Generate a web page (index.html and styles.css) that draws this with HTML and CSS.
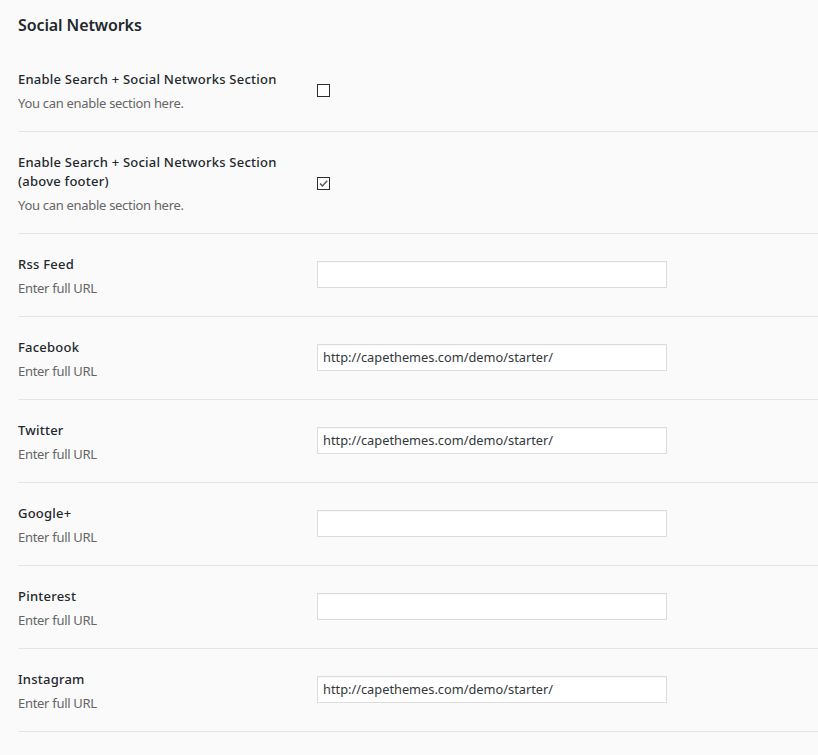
FILE: index.html
```html
<!DOCTYPE html>
<html lang="en">
<head>
<meta charset="utf-8">
<title>Social Networks</title>
<link rel="stylesheet" href="styles.css">
</head>
<body>
<div class="page">
  <h2 class="title">Social Networks</h2>
  <div class="table">
    <div class="row">
      <div class="th">
        <div class="label">Enable Search + Social Networks Section</div>
        <div class="desc">You can enable section here.</div>
      </div>
      <div class="td">
        <span class="check"></span>
      </div>
    </div>
    <div class="row">
      <div class="th">
        <div class="label">Enable Search + Social Networks Section (above footer)</div>
        <div class="desc">You can enable section here.</div>
      </div>
      <div class="td">
        <span class="check checked"><svg viewBox="0 0 9 9" width="9" height="9"><path d="M1 4.6 L3.4 7 L8.2 1.8" fill="none" stroke="#555" stroke-width="1.4"/></svg></span>
      </div>
    </div>
    <div class="row">
      <div class="th">
        <div class="label">Rss Feed</div>
        <div class="desc">Enter full URL</div>
      </div>
      <div class="td"><input class="field" type="text" value=""></div>
    </div>
    <div class="row">
      <div class="th">
        <div class="label">Facebook</div>
        <div class="desc">Enter full URL</div>
      </div>
      <div class="td"><input class="field" type="text" value="http://capethemes.com/demo/starter/"></div>
    </div>
    <div class="row">
      <div class="th">
        <div class="label">Twitter</div>
        <div class="desc">Enter full URL</div>
      </div>
      <div class="td"><input class="field" type="text" value="http://capethemes.com/demo/starter/"></div>
    </div>
    <div class="row">
      <div class="th">
        <div class="label">Google+</div>
        <div class="desc">Enter full URL</div>
      </div>
      <div class="td"><input class="field" type="text" value=""></div>
    </div>
    <div class="row">
      <div class="th">
        <div class="label">Pinterest</div>
        <div class="desc">Enter full URL</div>
      </div>
      <div class="td"><input class="field" type="text" value=""></div>
    </div>
    <div class="row">
      <div class="th">
        <div class="label">Instagram</div>
        <div class="desc">Enter full URL</div>
      </div>
      <div class="td"><input class="field" type="text" value="http://capethemes.com/demo/starter/"></div>
    </div>
  </div>
</div>
</body>
</html>
```
FILE: styles.css
```css
html, body {
  margin: 0;
  padding: 0;
  background: #fafafa;
}
body {
  font-family: "Noto Sans", "Open Sans", sans-serif;
  color: #23282d;
  font-size: 13px;
}
.page {
  padding-left: 18px;
  min-height: 755px;
}
.title {
  margin: 0;
  padding-top: 15px;
  font-size: 16px;
  line-height: 20px;
  font-weight: 600;
  letter-spacing: -0.1px;
  color: #23282d;
}
.table {
  margin-top: 14px;
}
.row {
  display: flex;
  align-items: center;
  border-bottom: 1px solid #e5e5e5;
}
.th {
  width: 299px;
  box-sizing: border-box;
  padding: 21px 10px 18px 0;
}
.label {
  font-weight: 500;
  font-size: 13px;
  line-height: 19px;
  letter-spacing: 0.23px;
  color: #23282d;
}
.desc {
  margin-top: 5px;
  font-size: 13px;
  line-height: 19px;
  letter-spacing: -0.3px;
  color: #666;
}
.td {
  display: flex;
  align-items: center;
}
.check {
  display: flex;
  align-items: center;
  justify-content: center;
  width: 13px;
  height: 13px;
  box-sizing: border-box;
  border: 1.6px solid #2c2c2c;
  background: #fff;
  margin-top: 1px;
}
.check svg {
  display: block;
}
.field {
  width: 350px;
  height: 27px;
  box-sizing: border-box;
  margin: 0 0 2px 0;
  padding: 0 5px;
  border: 1px solid #dcdcdc;
  box-shadow: inset 0 1px 1px rgba(0,0,0,0.03);
  background: #fff;
  font-family: "Noto Sans", "Open Sans", sans-serif;
  font-size: 12.8px;
  letter-spacing: 0px;
  color: #32373c;
  outline: none;
}
```
